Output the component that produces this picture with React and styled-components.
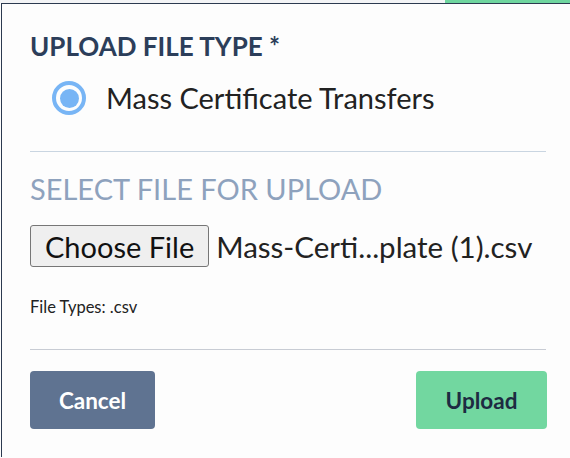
import styled, { createGlobalStyle } from 'styled-components';

const Global = createGlobalStyle`
  body {
    margin: 0;
    background: #fdfdfd;
    font-family: Lato, "Open Sans", sans-serif;
  }
`;

const Strip = styled.div`
  display: flex;
  height: 3px;
`;

const StripPart = styled.div`
  flex: ${p => (p.grow ? 1 : 'none')};
  width: ${p => (p.grow ? 'auto' : `${p.w}px`)};
  background: ${p => p.color};
`;

const Modal = styled.div`
  margin-left: 1px;
  border-top: 1px solid #2c3a50;
  border-left: 1px solid #2c3a50;
  background: #fdfdfd;
  padding: 28px 24px 30px 28px;
  height: 454px;
  box-sizing: border-box;
`;

const Heading = styled.div`
  font-size: 26px;
  line-height: 28px;
  font-weight: 700;
  color: #2c3e5a;
`;

const RadioRow = styled.label`
  display: flex;
  align-items: center;
  gap: 20px;
  height: 38px;
  margin-top: 18px;
  padding-bottom: 2px;
  padding-left: 22px;
  font-size: 29px;
  color: #222;
`;

const Radio = styled.span`
  width: 34px;
  height: 34px;
  margin-top: 2px;
  box-sizing: border-box;
  border-radius: 50%;
  border: 4px solid #78b5f5;
  display: flex;
  align-items: center;
  justify-content: center;
  &::after {
    content: '';
    width: 19px;
    height: 19px;
    border-radius: 50%;
    background: #78b5f5;
  }
`;

const Divider = styled.hr`
  border: none;
  border-top: 1px solid ${p => p.color};
  margin: ${p => p.m}px 0 0;
`;

const SubHeading = styled.div`
  margin-top: 19px;
  font-size: 29px;
  line-height: 36px;
  color: #8ea2bd;
`;

const FileRow = styled.div`
  display: flex;
  align-items: center;
  gap: 7px;
  margin-top: 18px;
  font-size: 29.5px;
  color: #222;
`;

const ChooseButton = styled.button`
  height: 42px;
  padding: 0 14px;
  font: inherit;
  font-size: 29px;
  color: #111;
  background: #efefef;
  border: 1px solid #767676;
  border-radius: 3px;
`;

const Hint = styled.div`
  margin-top: 30px;
  font-size: 16.5px;
  line-height: 20px;
  color: #222;
`;

const Actions = styled.div`
  display: flex;
  justify-content: space-between;
  margin-top: 21px;
  margin-right: -1px;
`;

const Button = styled.button`
  height: 58px;
  width: ${p => p.w}px;
  border: none;
  border-radius: 4px;
  font-family: inherit;
  font-size: 22.5px;
  font-weight: 700;
  background: ${p => (p.primary ? '#72d7a0' : '#5f7391')};
  color: ${p => (p.primary ? '#1d2b42' : '#fff')};
`;

export default function App() {
  return (
    <>
      <Global />
      <Strip>
        <StripPart w={445} color="#f3f4f6" />
        <StripPart grow color="#6fd69f" />
      </Strip>
      <Modal>
        <Heading>UPLOAD FILE TYPE *</Heading>
        <RadioRow>
          <Radio />
          Mass Certificate Transfers
        </RadioRow>
        <Divider color="#c9d5e1" m={33} />
        <SubHeading>SELECT FILE FOR UPLOAD</SubHeading>
        <FileRow>
          <ChooseButton>Choose File</ChooseButton>
          <span>Mass-Certi...plate (1).csv</span>
        </FileRow>
        <Hint>File Types: .csv</Hint>
        <Divider color="#c8ccd4" m={32} />
        <Actions>
          <Button w={125}>Cancel</Button>
          <Button w={131} primary>
            Upload
          </Button>
        </Actions>
      </Modal>
    </>
  );
}
